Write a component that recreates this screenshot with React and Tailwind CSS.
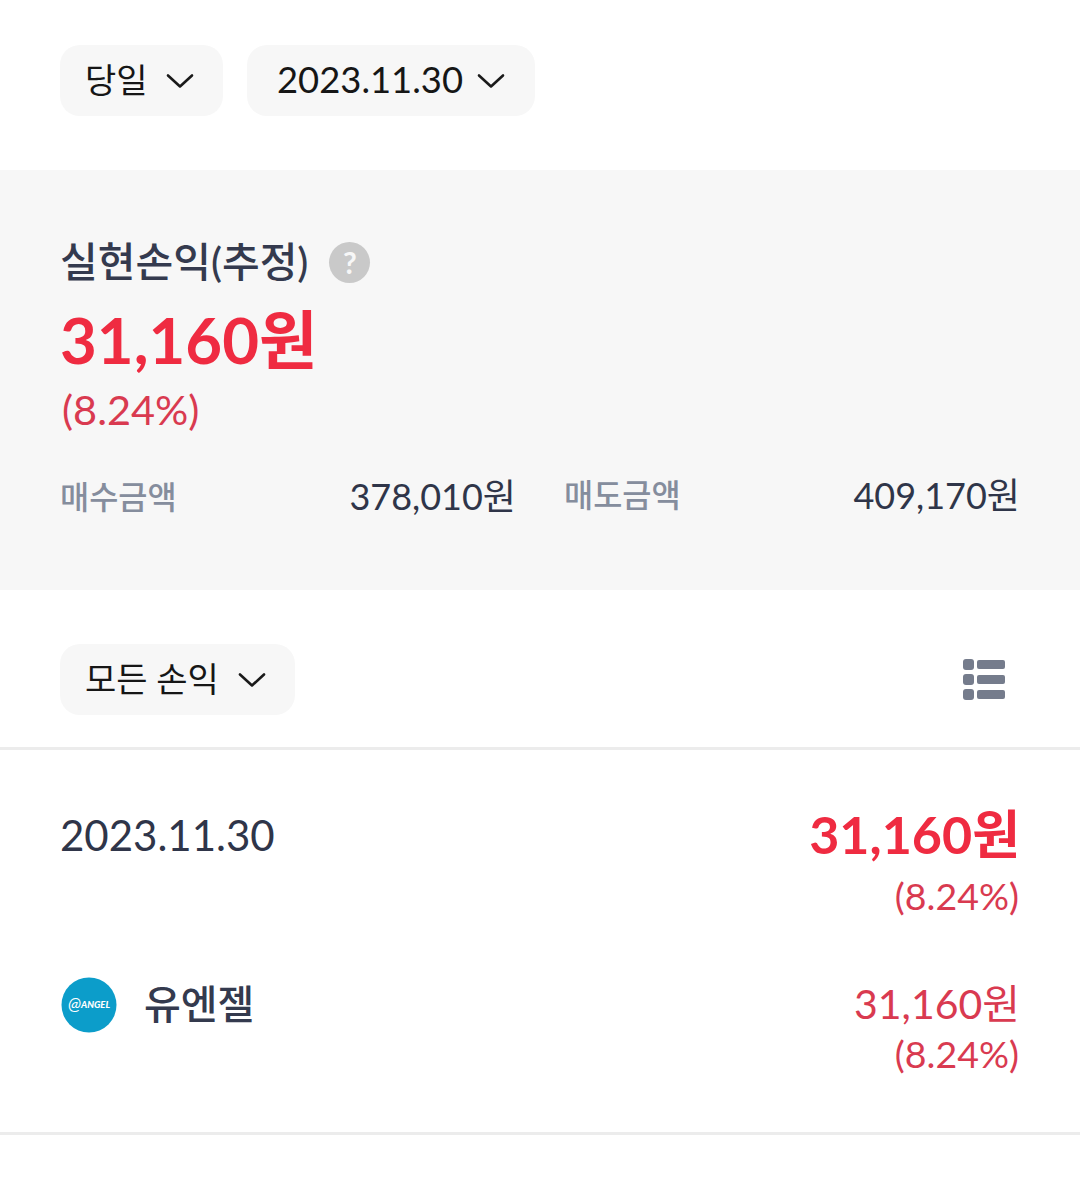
import React from 'react'

const FONT = 'font-["Lato","Noto_Sans_CJK_KR",sans-serif]'

function Chevron() {
  return (
    <svg width="28" height="16" viewBox="0 0 28 16" fill="none" className="shrink-0">
      <path d="M2 2.5 L14 13.5 L26 2.5" stroke="#1a1a1a" strokeWidth="2.6" strokeLinecap="round" strokeLinejoin="round" />
    </svg>
  )
}

function Chip({ label, className }) {
  return (
    <div className={`flex h-[71px] items-center rounded-[20px] bg-[#f7f7f7] text-[#161616] ${className}`}>
      <span className="pb-[2px]">{label}</span>
      <Chevron />
    </div>
  )
}

function ListIcon() {
  return (
    <svg width="44" height="44" viewBox="0 0 44 44" fill="#757c8c">
      <rect x="1" y="1" width="11" height="11" rx="3" />
      <rect x="15" y="2" width="28" height="9" rx="2" />
      <rect x="1" y="16" width="11" height="11" rx="3" />
      <rect x="15" y="17" width="28" height="9" rx="2" />
      <rect x="1" y="31" width="11" height="11" rx="3" />
      <rect x="15" y="32" width="28" height="9" rx="2" />
    </svg>
  )
}

function AngelLogo() {
  return (
    <svg width="56" height="56" viewBox="0 0 56 56" className="shrink-0">
      <circle cx="28" cy="28" r="27.5" fill="#0c9dca" />
      <text x="7" y="33" fill="#fff" fontSize="17" fontStyle="italic" fontFamily="Lato, sans-serif">@</text>
      <text x="20" y="31" fill="#fff" fontSize="8.5" fontWeight="900" fontStyle="italic" fontFamily="Lato, sans-serif" textLength="29" lengthAdjust="spacingAndGlyphs">ANGEL</text>
    </svg>
  )
}

export default function App() {
  return (
    <div className={`h-[1196px] w-[1080px] overflow-hidden bg-white ${FONT}`}>
      <div className="flex h-[170px] items-start gap-6 px-[60px] pt-[45px]">
        <Chip label="당일" className="w-[163px] gap-[18px] pl-[25px] text-[34px]" />
        <Chip label="2023.11.30" className="w-[288px] gap-[14px] pl-[30px] text-[36.4px]" />
      </div>

      <section className="h-[420px] bg-[#f7f7f7] px-[60px] pt-[66px]">
        <div className="flex h-[52px] items-center gap-[21px]">
          <span className="text-[41px] font-medium text-[#343a4e]">실현손익(추정)</span>
          <span className="flex h-[41px] w-[41px] items-center justify-center rounded-full bg-[#c9c9c9] text-[30px] font-bold text-[#f7f7f7]">?</span>
        </div>
        <p className="mt-[14px] text-[63.5px] leading-[76px] font-bold text-[#ef2b41]">31,160원</p>
        <p className="mt-[2px] pl-[2px] text-[41.5px] leading-[58px] text-[#d93a50]">(8.24%)</p>
        <div className="mt-[29px] grid grid-cols-2 gap-[48px]">
          <div className="flex items-center justify-between pt-[2px]">
            <span className="mt-[3px] text-[31.7px] font-medium text-[#858d9d]">매수금액</span>
            <span className="text-[36px] text-[#2f3549]">378,010원</span>
          </div>
          <div className="flex items-center justify-between">
            <span className="mt-[2px] text-[31.7px] font-medium text-[#858d9d]">매도금액</span>
            <span className="text-[36px] text-[#2f3549]">409,170원</span>
          </div>
        </div>
      </section>

      <div className="flex h-[160px] items-start justify-between border-b-[3px] border-[#ececec] pt-[54px] pr-[74px] pl-[60px]">
        <Chip label="모든 손익" className="w-[235px] gap-[19px] pl-[25px] text-[34px]" />
        <div className="pt-[14px]"><ListIcon /></div>
      </div>

      <div className="flex justify-between px-[60px] pt-[49px]">
        <span className="mt-[1px] text-[42px] leading-[70px] text-[#2f3549]">2023.11.30</span>
        <div className="text-right">
          <p className="text-[52px] leading-[70px] font-bold text-[#ef2b41]">31,160원</p>
          <p className="pr-[1px] text-[37.5px] leading-[54px] text-[#d93a50]">(8.24%)</p>
        </div>
      </div>

      <div className="flex h-[212px] justify-between border-b-[3px] border-[#ececec] px-[60px] pt-[51px]">
        <div className="flex items-start gap-[27px] pl-[1px]">
          <div className="pt-[3px]"><AngelLogo /></div>
          <span className="text-[40px] leading-[60px] font-medium text-[#343a4e]">유엔젤</span>
        </div>
        <div className="pt-[2px] text-right">
          <p className="text-[41px] leading-[56px] text-[#d93a50]">31,160원</p>
          <p className="pr-[1px] text-[37.5px] leading-[44px] text-[#d93a50]">(8.24%)</p>
        </div>
      </div>
    </div>
  )
}
